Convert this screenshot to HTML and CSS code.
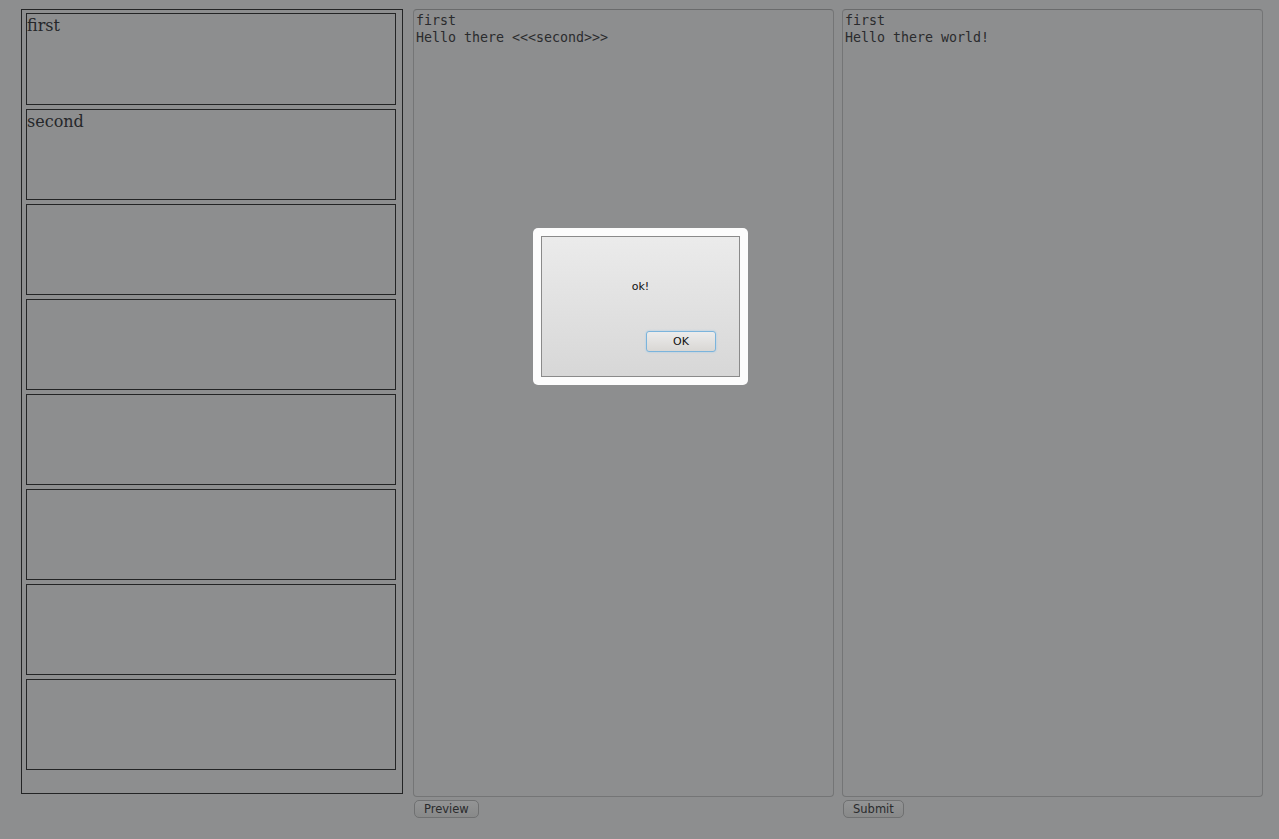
FILE: index.html
```html
<!DOCTYPE html>
<html>
<head>
<meta charset="utf-8">
<link rel="stylesheet" href="styles.css">
</head>
<body>
<div class="page">
  <div class="slots">
    <div class="slot slot-first">first</div>
    <div class="slot">second</div>
    <div class="slot"></div>
    <div class="slot"></div>
    <div class="slot"></div>
    <div class="slot"></div>
    <div class="slot"></div>
    <div class="slot"></div>
  </div>
  <div class="col">
    <div class="editor">first
Hello there &lt;&lt;&lt;second&gt;&gt;&gt;</div>
    <button class="btn">Preview</button>
  </div>
  <div class="col col-right">
    <div class="editor">first
Hello there world!</div>
    <button class="btn">Submit</button>
  </div>
</div>
<div class="overlay">
  <div class="dialog">
    <div class="dialog-inner">
      <div class="msg">ok!</div>
      <div class="actions"><button class="ok">OK</button></div>
    </div>
  </div>
</div>
</body>
</html>
```

FILE: styles.css
```css
html, body {
  margin: 0;
  padding: 0;
  height: 100%;
  background: #8d8e8f;
}
.page {
  display: flex;
  align-items: flex-start;
  padding: 9px 0 0 21px;
  gap: 10px;
}
.slots {
  width: 382px;
  box-sizing: border-box;
  border: 1px solid #232425;
  padding: 3px 6px 23px 4px;
  display: flex;
  flex-direction: column;
  gap: 4px;
}
.slot {
  height: 91px;
  box-sizing: border-box;
  border: 1px solid #232425;
  font-family: "DejaVu Serif", serif;
  font-size: 16px;
  line-height: 24px;
  color: #25272a;
}
.slot-first {
  height: 92px;
}
.col {
  width: 421px;
  display: flex;
  flex-direction: column;
  gap: 3px;
}
.col-right {
  margin-left: -2px;
}
.editor {
  height: 788px;
  box-sizing: border-box;
  border: 1px solid #747576;
  border-top-color: #6a6b6c;
  border-radius: 4px;
  padding: 2px 2px;
  font-family: "DejaVu Sans Mono", monospace;
  font-size: 13.3px;
  line-height: 17px;
  color: #2a2b2d;
  white-space: pre;
}
.btn {
  align-self: flex-start;
  margin-left: 1px;
  height: 18px;
  padding: 0 9px;
  border: 1px solid #6f7071;
  border-radius: 5px;
  background: linear-gradient(#939495, #888989);
  font-family: "DejaVu Sans", sans-serif;
  font-size: 11.5px;
  line-height: 16px;
  color: #2a2b2d;
}
.overlay {
  position: fixed;
  left: 533px;
  top: 228px;
}
.dialog {
  width: 215px;
  height: 157px;
  box-sizing: border-box;
  background: #fcfcfc;
  border-radius: 5px;
  padding: 8px;
}
.dialog-inner {
  height: 100%;
  box-sizing: border-box;
  border: 1px solid #8a8a8a;
  background: linear-gradient(#ebebeb, #d7d7d7);
  display: flex;
  flex-direction: column;
  align-items: center;
}
.msg {
  margin-top: 43px;
  font-family: "DejaVu Sans", sans-serif;
  font-size: 11px;
  line-height: 14px;
  color: #111;
}
.actions {
  align-self: stretch;
  display: flex;
  justify-content: flex-end;
  padding-right: 23px;
  margin-top: 37px;
}
.ok {
  width: 70px;
  height: 21px;
  box-sizing: border-box;
  border: 1px solid #7bb4dc;
  box-shadow: 0 0 2px #9cc9ea;
  border-radius: 3px;
  background: linear-gradient(#ececec, #d9d7d4);
  font-family: "DejaVu Sans", sans-serif;
  font-size: 11px;
  color: #111;
  padding: 0;
}
```
